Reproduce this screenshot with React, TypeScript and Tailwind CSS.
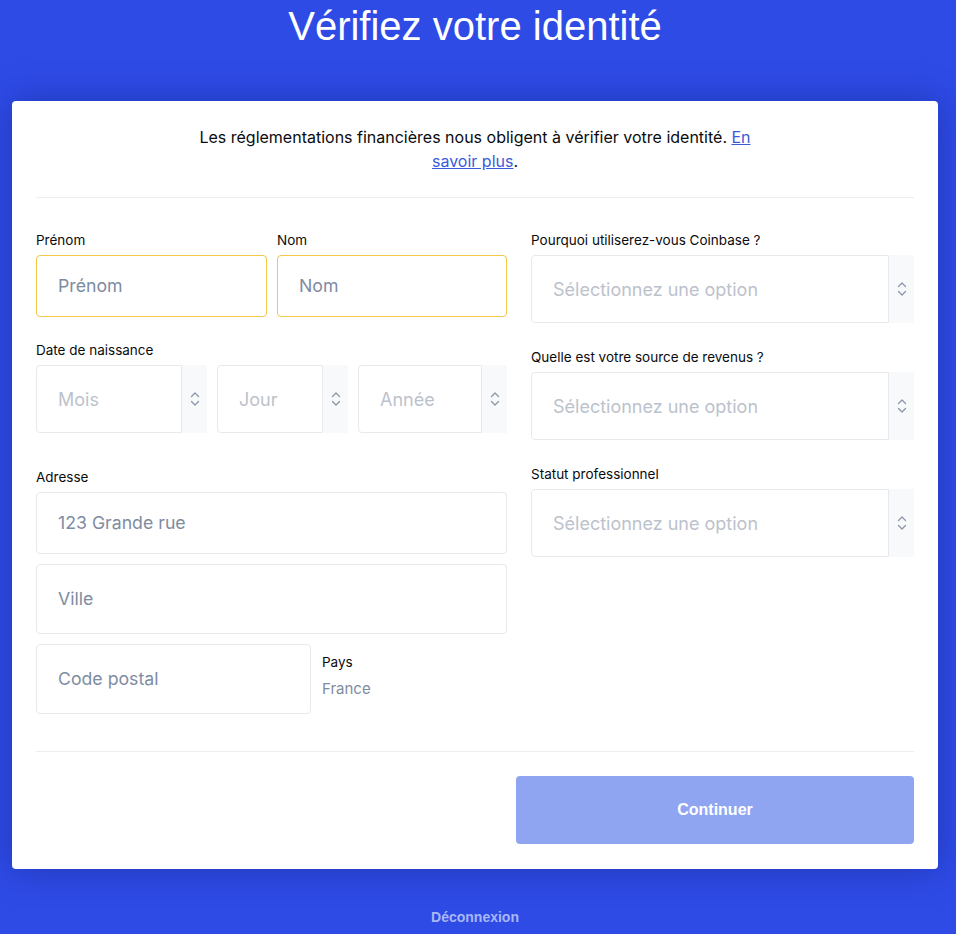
import React from "react";

const body = { fontFamily: "Inter, 'Noto Sans', sans-serif" };
const arial = { fontFamily: "'Liberation Sans', Arial, sans-serif" };

const Chevrons: React.FC = () => (
  <svg width="10" height="18" viewBox="0 0 10 18" fill="none" stroke="#8b95a7" strokeWidth="1.3" strokeLinecap="round" strokeLinejoin="round" aria-hidden="true">
    <path d="M1.5 6.5 5 3l3.5 3.5" />
    <path d="M1.5 11.5 5 15l3.5-3.5" />
  </svg>
);

const Label: React.FC<{ children: React.ReactNode; className?: string }> = ({ children, className = "" }) => (
  <div className={`text-[13.5px] leading-[16px] text-[#0a0b0d] mb-[7px] ${className}`}>{children}</div>
);

const TextInput: React.FC<{ placeholder: string; h: string; focus?: boolean; className?: string }> = ({ placeholder, h, focus, className = "" }) => (
  <div
    className={`${h} ${className} flex items-center px-[21px] rounded-[4px] border ${focus ? "border-[#f1c84a]" : "border-[#e7e9ed]"} text-[17.7px] text-[#7e8ca2]`}
  >
    {placeholder}
  </div>
);

const SelectBox: React.FC<{ placeholder: string; className?: string }> = ({ placeholder, className = "" }) => (
  <div className={`flex h-[68px] ${className}`}>
    <div className="flex-1 min-w-0 flex items-center px-[21px] border border-[#e7e9ed] rounded-l-[4px] text-[18px] text-[#bcc2cc] whitespace-nowrap overflow-hidden">
      {placeholder}
    </div>
    <div className="w-[25px] shrink-0 bg-[#f8f9fb] flex items-center justify-center">
      <Chevrons />
    </div>
  </div>
);

export default function App() {
  return (
    <div className="min-h-screen bg-[#2e4be6] flex flex-col items-center pr-[6px]" style={body}>
      <h1 className="text-white text-[40px] leading-[50px] pt-[1px] font-normal" style={arial}>
        Vérifiez votre identité
      </h1>

      <div className="mt-[50px] w-[926px] self-start ml-[12px] bg-white rounded-[4px] shadow-[0_0_36px_rgba(10,20,90,0.35)] px-[24px] pt-[24px] pb-[25px]">
        <p className="text-center text-[16px] leading-[24px] text-[#0a0b0d] max-w-[560px] mx-auto">
          Les réglementations financières nous obligent à vérifier votre identité.{" "}
          <a className="text-[#3b5bdb] underline">En savoir plus</a>.
        </p>
        <div className="h-px bg-[#eceef1] mt-[24px]" />

        <div className="flex gap-[24px] pt-[34px]">
          {/* left column */}
          <div className="w-[471px] shrink-0">
            <div className="flex gap-[10px]">
              <div className="w-[231px]">
                <Label>Prénom</Label>
                <TextInput placeholder="Prénom" h="h-[62px]" focus />
              </div>
              <div className="flex-1">
                <Label>Nom</Label>
                <TextInput placeholder="Nom" h="h-[62px]" focus />
              </div>
            </div>

            <Label className="mt-[25px]">Date de naissance</Label>
            <div className="flex gap-[10px]">
              <SelectBox placeholder="Mois" className="w-[171px]" />
              <SelectBox placeholder="Jour" className="w-[131px]" />
              <SelectBox placeholder="Année" className="flex-1" />
            </div>

            <Label className="mt-[36px]">Adresse</Label>
            <TextInput placeholder="123 Grande rue" h="h-[62px]" />
            <TextInput placeholder="Ville" h="h-[70px]" className="mt-[10px]" />
            <div className="flex gap-[11px] mt-[10px]">
              <TextInput placeholder="Code postal" h="h-[70px]" className="w-[275px]" />
              <div className="pt-[10px]">
                <div className="text-[13.5px] leading-[16px] text-[#0a0b0d]">Pays</div>
                <div className="text-[15px] leading-[20px] text-[#7e8ca2] mt-[9px]">France</div>
              </div>
            </div>
          </div>

          {/* right column */}
          <div className="flex-1 min-w-0">
            <Label>Pourquoi utiliserez-vous Coinbase ?</Label>
            <SelectBox placeholder="Sélectionnez une option" />
            <Label className="mt-[26px]">Quelle est votre source de revenus ?</Label>
            <SelectBox placeholder="Sélectionnez une option" />
            <Label className="mt-[26px]">Statut professionnel</Label>
            <SelectBox placeholder="Sélectionnez une option" />
          </div>
        </div>

        <div className="h-px bg-[#eceef1] mt-[37px]" />
        <div className="flex justify-end mt-[24px]">
          <button
            className="w-[398px] h-[68px] rounded-[4px] bg-[#8fa5f1] text-white text-[16px] font-bold"
            style={arial}
          >
            Continuer
          </button>
        </div>
      </div>

      <div className="mt-[38px] text-[14px] font-bold text-[#a9b7f6]" style={arial}>
        Déconnexion
      </div>
    </div>
  );
}
